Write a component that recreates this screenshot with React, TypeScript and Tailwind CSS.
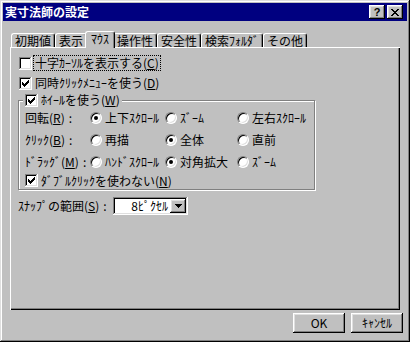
import React from 'react';

const TABS = [
  { label: '初期値', w: 'w-[44px]' },
  { label: '表示', w: 'w-[32px]' },
  { label: 'ﾏｳｽ', w: 'w-[30px]', active: true },
  { label: '操作性', w: 'w-[44px]' },
  { label: '安全性', w: 'w-[44px]' },
  { label: '検索ﾌｫﾙﾀﾞ', w: 'w-[62px]' },
  { label: 'その他', w: 'w-[44px]' },
];

function Check() {
  return (
    <svg width="7" height="7" viewBox="0 0 7 7" shapeRendering="crispEdges">
      <polygon points="0,2 2,4 6,0 7,0 7,3 2,7 0,5" fill="#000" />
    </svg>
  );
}

function Checkbox({ checked }: { checked?: boolean }) {
  return (
    <span className="flex h-[13px] w-[13px] shrink-0 items-center justify-center bg-white shadow-[inset_-1px_-1px_#fff,inset_1px_1px_#808080,inset_-2px_-2px_#dfdfdf,inset_2px_2px_#000]">
      {checked && <Check />}
    </span>
  );
}

function Radio({ checked }: { checked?: boolean }) {
  return (
    <span className="flex h-[12px] w-[12px] shrink-0 items-center justify-center rounded-full border border-t-[#808080] border-l-[#808080] border-b-white border-r-white bg-white shadow-[inset_1px_1px_#000,inset_-1px_-1px_#dfdfdf]">
      {checked && <span className="h-[4px] w-[4px] rounded-full bg-black" />}
    </span>
  );
}

function Opt({ label, checked }: { label: string; checked?: boolean }) {
  return (
    <div className="flex items-center gap-[3px] whitespace-nowrap">
      <Radio checked={checked} />
      <span>{label}</span>
    </div>
  );
}

function Mn({ k }: { k: string }) {
  return (
    <>
      (<u className="underline-offset-1">{k}</u>)
    </>
  );
}

function Colon() {
  return <span className="ml-[4px]">:</span>;
}

const raised =
  'shadow-[inset_-1px_-1px_#000,inset_1px_1px_#fff,inset_-2px_-2px_#808080,inset_2px_2px_#dfdfdf]';

export default function App() {
  return (
    <div className="h-[342px] w-[410px] bg-[#c0c0c0] p-[3px] text-[12px] leading-[14px] text-black font-['Noto_Sans_CJK_JP','Noto_Sans',sans-serif] shadow-[inset_-1px_-1px_#000,inset_1px_1px_#dfdfdf,inset_-2px_-2px_#808080,inset_2px_2px_#fff]">
      {/* Title bar */}
      <div className="flex h-[18px] items-center justify-between bg-[#000080] pl-[2px] pr-[4px]">
        <span className="text-[12px] font-bold text-white">実寸法師の設定</span>
        <div className="flex gap-[2px]">
          <div className={`flex h-[14px] w-[16px] items-center justify-center bg-[#c0c0c0] ${raised}`}>
            <span className="text-[11px] font-bold leading-none font-['Liberation_Sans',sans-serif]">?</span>
          </div>
          <div className={`flex h-[14px] w-[16px] items-center justify-center bg-[#c0c0c0] ${raised}`}>
            <svg width="8" height="7" viewBox="0 0 8 7" shapeRendering="crispEdges">
              <path d="M0 0h2v1h-2zM6 0h2v1h-2zM1 1h2v1h-2zM5 1h2v1h-2zM2 2h4v1h-4zM3 3h2v1h-2zM2 4h4v1h-4zM1 5h2v1h-2zM5 5h2v1h-2zM0 6h2v1h-2zM6 6h2v1h-2z" fill="#000" />
            </svg>
          </div>
        </div>
      </div>

      {/* Tabs */}
      <div className="ml-[8px] mt-[10px] flex items-end whitespace-nowrap">
        {TABS.map((t) =>
          t.active ? (
            <div
              key={t.label}
              className={`relative z-10 -mx-[2px] -mb-[1px] flex h-[17px] ${t.w} items-center justify-center rounded-t-[3px] border-l border-t border-r border-white border-r-black bg-[#c0c0c0] pb-[2px] shadow-[inset_-1px_0_#808080]`}
            >
              {t.label}
            </div>
          ) : (
            <div
              key={t.label}
              className={`flex h-[14px] ${t.w} items-center justify-center rounded-t-[3px] border-l border-t border-r border-white border-r-black shadow-[inset_-1px_0_#808080]`}
            >
              {t.label}
            </div>
          )
        )}
      </div>

      {/* Panel */}
      <div className="ml-[7px] h-[263px] w-[390px] whitespace-nowrap border-l border-t border-white pl-[8px] pt-[7px] shadow-[inset_-1px_-1px_#000,inset_-2px_-2px_#808080]">
        <div className="flex h-[16px] items-center">
          <Checkbox />
          <span className="ml-[1px] flex h-[16px] items-center border border-dotted border-black px-[1px]">
            十字ｶｰｿﾙを表示する<Mn k="C" />
          </span>
        </div>
        <div className="mt-[4px] flex h-[16px] items-center">
          <Checkbox checked />
          <span className="ml-[3px]">
            同時ｸﾘｯｸﾒﾆｭｰを使う<Mn k="D" />
          </span>
        </div>

        {/* Wheel group */}
        <div className="relative -ml-[1px] mt-[9px] h-[90px] w-[297px] border border-[#808080] pl-[6px] pt-[6px] shadow-[inset_1px_1px_#fff,1px_1px_#fff]">
          <div className="absolute -top-[8px] left-[4px] flex h-[14px] items-center gap-[3px] bg-[#c0c0c0] px-[2px]">
            <Checkbox checked />
            <span>
              ﾎｲｰﾙを使う<Mn k="W" />
            </span>
          </div>
          <div className="grid h-[22px] grid-cols-[65px_75px_72px_1fr] items-center">
            <span>
              回転<Mn k="R" />
              <Colon />
            </span>
            <Opt label="上下ｽｸﾛｰﾙ" checked />
            <Opt label="ｽﾞｰﾑ" />
            <Opt label="左右ｽｸﾛｰﾙ" />
          </div>
          <div className="grid h-[22px] grid-cols-[65px_75px_72px_1fr] items-center">
            <span>
              ｸﾘｯｸ<Mn k="B" />
              <Colon />
            </span>
            <Opt label="再描" />
            <Opt label="全体" checked />
            <Opt label="直前" />
          </div>
          <div className="grid h-[22px] grid-cols-[65px_75px_72px_1fr] items-center">
            <span>
              ﾄﾞﾗｯｸﾞ<Mn k="M" />
              <Colon />
            </span>
            <Opt label="ﾊﾝﾄﾞｽｸﾛｰﾙ" />
            <Opt label="対角拡大" checked />
            <Opt label="ｽﾞｰﾑ" />
          </div>
          <div className="flex h-[15px] items-center gap-[3px]">
            <Checkbox checked />
            <span>
              ﾀﾞﾌﾞﾙｸﾘｯｸを使わない<Mn k="N" />
            </span>
          </div>
        </div>

        {/* Snap */}
        <div className="-ml-[1px] mt-[7px] flex h-[18px] items-center">
          <span className="w-[95px]">
            ｽﾅｯﾌﾟの範囲<Mn k="S" />
            <Colon />
          </span>
          <div className="flex h-[18px] w-[75px] items-center bg-white pl-[2px] shadow-[inset_-1px_-1px_#fff,inset_1px_1px_#808080,inset_-2px_-2px_#dfdfdf,inset_2px_2px_#000]">
            <span className="flex-1 pr-[2px] text-right">8ﾋﾟｸｾﾙ</span>
            <div className={`mr-[2px] flex h-[14px] w-[16px] items-center justify-center bg-[#c0c0c0] ${raised}`}>
              <svg width="7" height="4" viewBox="0 0 7 4" shapeRendering="crispEdges">
                <polygon points="0,0 7,0 3.5,4" fill="#000" />
              </svg>
            </div>
          </div>
        </div>
      </div>

      {/* Buttons */}
      <div className="mr-[4px] mt-[3px] flex justify-end gap-[6px]">
        <button className={`flex h-[20px] w-[52px] items-center justify-center bg-[#c0c0c0] ${raised}`}>
          OK
        </button>
        <button className={`flex h-[20px] w-[52px] items-center justify-center bg-[#c0c0c0] ${raised}`}>
          ｷｬﾝｾﾙ
        </button>
      </div>
    </div>
  );
}
